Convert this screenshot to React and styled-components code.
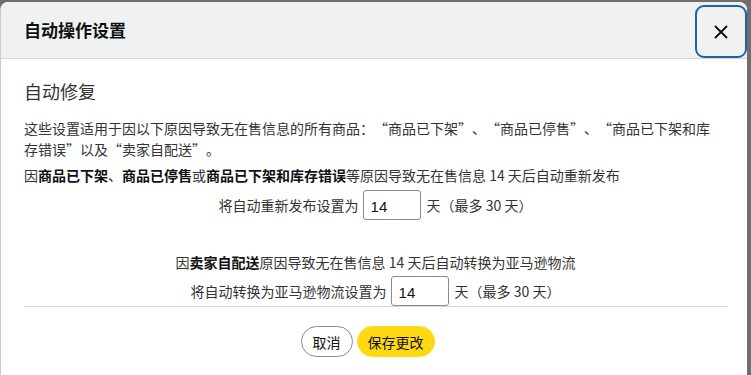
import React from "react";
import styled, { createGlobalStyle } from "styled-components";

const CJK = `"Noto Sans CJK SC", "Liberation Sans", Arial, sans-serif`;

const Global = createGlobalStyle`
  html, body { margin: 0; padding: 0; }
  body {
    background: #6e6e6e;
    width: 751px;
    height: 375px;
    overflow: hidden;
    font-family: ${CJK};
    color: #0f1111;
  }
`;

const Modal = styled.div`
  margin-top: 2px;
  width: 747px;
  height: 373px;
  background: #fff;
  border-left: 1px solid #c9cccc;
  border-radius: 8px 8px 0 0;
  overflow: hidden;
  display: flex;
  flex-direction: column;
  box-sizing: border-box;
`;

const Header = styled.div`
  height: 57px;
  flex: none;
  background: #f0f2f2;
  border-bottom: 1px solid #d5d9d9;
  display: flex;
  align-items: flex-start;
  justify-content: space-between;
  box-sizing: border-box;
  padding-left: 23px;
`;

const Title = styled.h1`
  margin: 0;
  font-family: ${CJK};
  font-size: 17px;
  font-weight: 700;
  line-height: 56px;
  color: #0f1111;
`;

const CloseButton = styled.button`
  width: 52px;
  height: 53px;
  margin-top: 3px;
  border: 2.5px solid #2162a1;
  border-radius: 9px;
  background: #f0f2f2;
  display: flex;
  align-items: center;
  justify-content: center;
  padding: 0;
  cursor: pointer;
`;

const Body = styled.div`
  padding: 20px 20px 0 23px;
  display: flex;
  flex-direction: column;
  font-family: ${CJK};
  font-size: 14px;
  color: #333;
`;

const Heading = styled.h2`
  margin: 0;
  font-size: 18px;
  line-height: 24px;
  font-weight: 400;
  color: #333;
`;

const Para = styled.p`
  margin: ${(p) => p.$mt}px 0 0;
  max-width: ${(p) => p.$maxW || "none"};
  font-size: 14px;
  line-height: 21px;
  color: #333;
  text-align: ${(p) => (p.$center ? "center" : "left")};
  b { font-weight: 700; color: #0f1111; }
`;

const Mark = styled.span`
  display: inline-block;
  width: 1em;
  line-height: 21px;
  vertical-align: top;
  text-align: ${(p) => (p.$open ? "right" : "left")};
`;

const Quote = ({ children }) => (
  <>
    <Mark $open>“</Mark>
    {children}
    <Mark>”</Mark>
  </>
);

const Row = styled.div`
  margin-top: 3.5px;
  height: 30px;
  display: flex;
  align-items: center;
  justify-content: center;
  font-size: 14px;
  color: #333;
`;

const NumInput = styled.input`
  width: 58px;
  height: 30px;
  box-sizing: border-box;
  margin: 0 6px 0 4px;
  border: 1px solid #888c8c;
  border-radius: 3px;
  padding: 3px 7px 0;
  font-family: "Liberation Sans", Arial, sans-serif;
  font-size: 15px;
  color: #0f1111;
  background: #fff;
  outline: none;
`;

const Footer = styled.div`
  margin: 0 20px 0 23px;
  border-top: 1px solid #d5d9d9;
  padding: 19px 16px 0 0;
  display: flex;
  justify-content: center;
  gap: 4px;
`;

const Pill = styled.button`
  height: 31px;
  padding: 0 ${(p) => (p.$primary ? 10 : 11)}px;
  border-radius: 16px;
  border: ${(p) => (p.$primary ? "1px solid #ffd814" : "1px solid #888c8c")};
  background: ${(p) => (p.$primary ? "#ffd814" : "#fff")};
  font-family: ${CJK};
  font-size: 14px;
  color: #0f1111;
  cursor: pointer;
`;

export default function App() {
  return (
    <>
      <Global />
      <Modal lang="zh-CN">
        <Header>
          <Title>自动操作设置</Title>
          <CloseButton aria-label="关闭">
            <svg width="14" height="14" viewBox="0 0 14 14">
              <path d="M1.5 1.5 L12.5 12.5 M12.5 1.5 L1.5 12.5" stroke="#0f1111" strokeWidth="1.9" strokeLinecap="round" />
            </svg>
          </CloseButton>
        </Header>
        <Body>
          <Heading>自动修复</Heading>
          <Para $mt={15} $maxW="692px">
            这些设置适用于因以下原因导致无在售信息的所有商品：<Quote>商品已下架</Quote>、<Quote>商品已停售</Quote>、<Quote>商品已下架和库存错误</Quote>以及<Quote>卖家自配送</Quote>。
          </Para>
          <Para $mt={5}>
            因<b>商品已下架</b>、<b>商品已停售</b>或<b>商品已下架和库存错误</b>等原因导致无在售信息 14 天后自动重新发布
          </Para>
          <Row>
            将自动重新发布设置为
            <NumInput defaultValue="14" />
            天（最多 30 天）
          </Row>
          <Para $mt={32} $center>
            因<b>卖家自配送</b>原因导致无在售信息 14 天后自动转换为亚马逊物流
          </Para>
          <Row>
            将自动转换为亚马逊物流设置为
            <NumInput defaultValue="14" />
            天（最多 30 天）
          </Row>
        </Body>
        <Footer>
          <Pill>取消</Pill>
          <Pill $primary>保存更改</Pill>
        </Footer>
      </Modal>
    </>
  );
}
